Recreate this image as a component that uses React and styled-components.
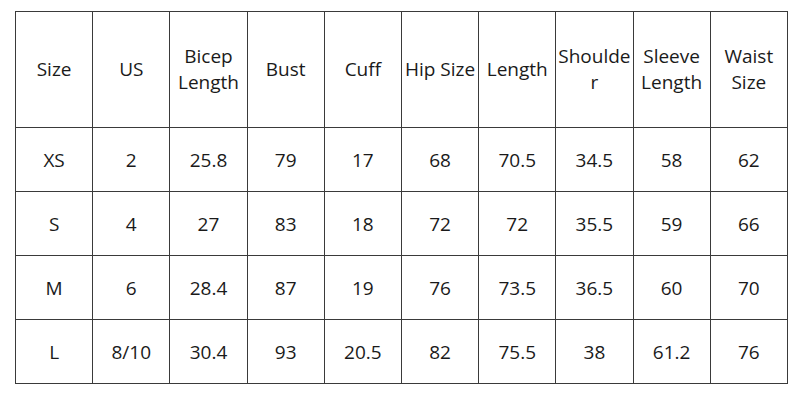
import styled, { createGlobalStyle } from "styled-components";

const GlobalStyle = createGlobalStyle`
  html, body {
    margin: 0;
    background: #ffffff;
  }
  body {
    font-family: "Open Sans", "Liberation Sans", sans-serif;
    color: #1a1a1a;
  }
`;

const Page = styled.div`
  width: 800px;
  height: 400px;
  padding: 11px 0 0 15px;
  box-sizing: border-box;
`;

const Table = styled.table`
  border-collapse: collapse;
  table-layout: fixed;
  width: 773px;
`;

const HeadCell = styled.th`
  height: 113px;
  padding: 0 0 2px;
  border: 1px solid #3a3a3a;
  font-weight: 400;
  font-size: 19px;
  line-height: 26px;
  text-align: center;
  vertical-align: middle;
  white-space: nowrap;
`;

const Cell = styled.td`
  height: 63px;
  padding: 0;
  border: 1px solid #3a3a3a;
  font-size: 19px;
  line-height: 24px;
  text-align: center;
  vertical-align: middle;
`;

const headers = [
  ["Size"],
  ["US"],
  ["Bicep", "Length"],
  ["Bust"],
  ["Cuff"],
  ["Hip Size"],
  ["Length"],
  ["Shoulde", "r"],
  ["Sleeve", "Length"],
  ["Waist", "Size"],
];

const rows = [
  ["XS", "2", "25.8", "79", "17", "68", "70.5", "34.5", "58", "62"],
  ["S", "4", "27", "83", "18", "72", "72", "35.5", "59", "66"],
  ["M", "6", "28.4", "87", "19", "76", "73.5", "36.5", "60", "70"],
  ["L", "8/10", "30.4", "93", "20.5", "82", "75.5", "38", "61.2", "76"],
];

const App = () => {
  return (
    <Page>
      <GlobalStyle />
      <Table>
        <thead>
          <tr>
            {headers.map((lines, i) => (
              <HeadCell key={i}>
                {lines.map((l, j) => (
                  <div key={j}>{l}</div>
                ))}
              </HeadCell>
            ))}
          </tr>
        </thead>
        <tbody>
          {rows.map((row, i) => (
            <tr key={i}>
              {row.map((v, j) => (
                <Cell key={j}>{v}</Cell>
              ))}
            </tr>
          ))}
        </tbody>
      </Table>
    </Page>
  );
};

export default App;
